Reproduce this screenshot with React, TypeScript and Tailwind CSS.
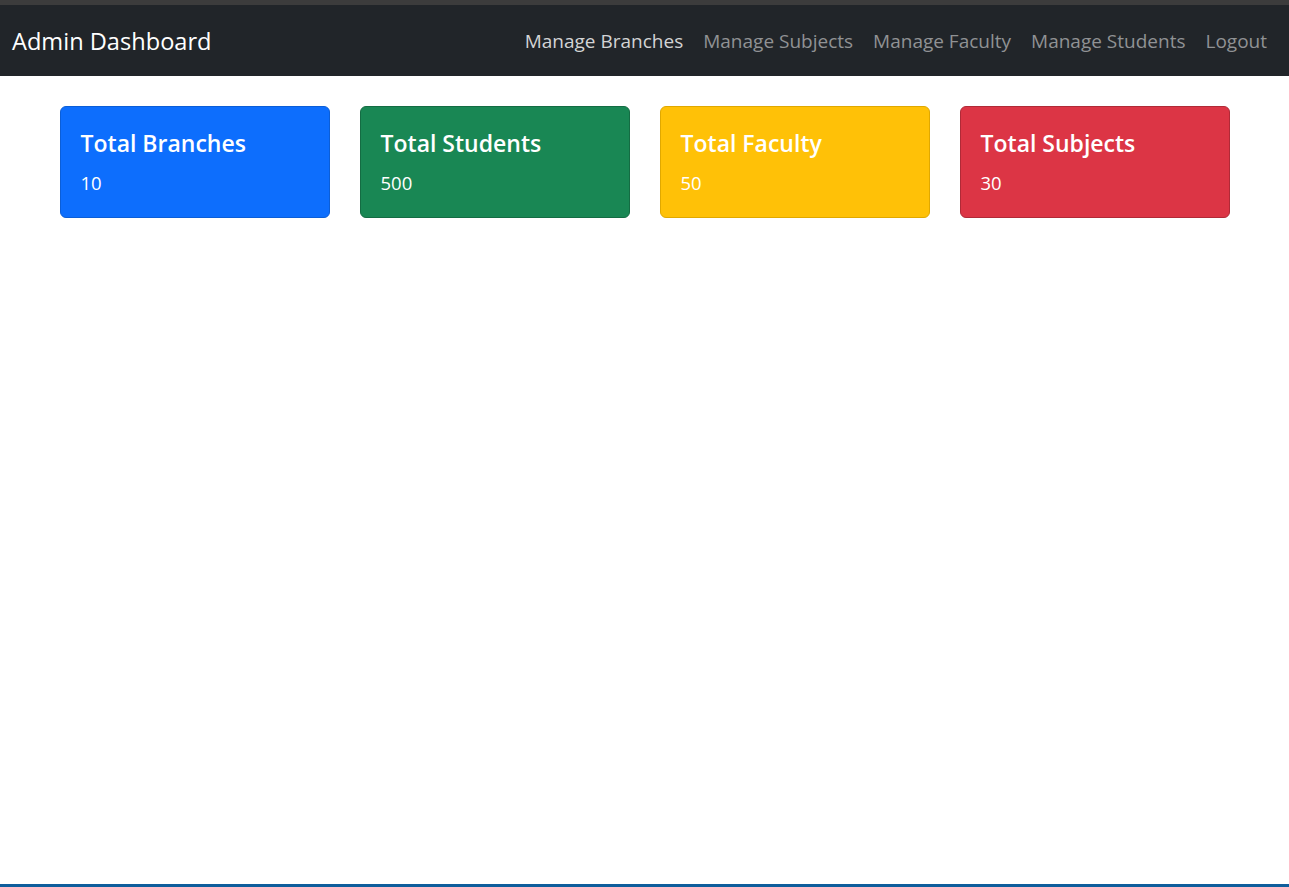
export default function App() {
  const stats = [
    { title: "Total Branches", value: 10, color: "bg-[#0d6efd] border-[#0b5ed7]" },
    { title: "Total Students", value: 500, color: "bg-[#198754] border-[#146c43]" },
    { title: "Total Faculty", value: 50, color: "bg-[#ffc107] border-[#e0a800]" },
    { title: "Total Subjects", value: 30, color: "bg-[#dc3545] border-[#b02a37]" },
  ];

  return (
    <div className="flex h-screen flex-col bg-white font-['Open_Sans',sans-serif]">
      <div className="h-[5px] bg-[#3c3c3c]" />
      <nav className="flex h-[71px] items-center justify-between bg-[#212529] pl-[12px] pr-[12px] pt-[2px]">
        <a href="#" className="text-[23.6px] text-white">Admin Dashboard</a>
        <ul className="flex text-[19px]">
          <li><a href="#" className="px-[10px] text-[#d3d4d5]">Manage Branches</a></li>
          <li><a href="#" className="px-[10px] text-[#909294]">Manage Subjects</a></li>
          <li><a href="#" className="px-[10px] text-[#909294]">Manage Faculty</a></li>
          <li><a href="#" className="px-[10px] text-[#909294]">Manage Students</a></li>
          <li><a href="#" className="px-[10px] text-[#909294]">Logout</a></li>
        </ul>
      </nav>
      <main className="flex-1">
        <div className="mx-auto mt-[30px] grid w-[1170px] grid-cols-4 gap-[30px]">
          {stats.map((s) => (
            <div key={s.title} className={`rounded-[6px] border px-[20px] pb-[19px] pt-[21px] text-white ${s.color}`}>
              <h5 className="mb-[10px] text-[23px] font-semibold leading-[30px]">{s.title}</h5>
              <p className="text-[18.5px] leading-[30px]">{s.value}</p>
            </div>
          ))}
        </div>
      </main>
      <div className="h-[3px] bg-[#0f5e9c]" />
    </div>
  );
}
